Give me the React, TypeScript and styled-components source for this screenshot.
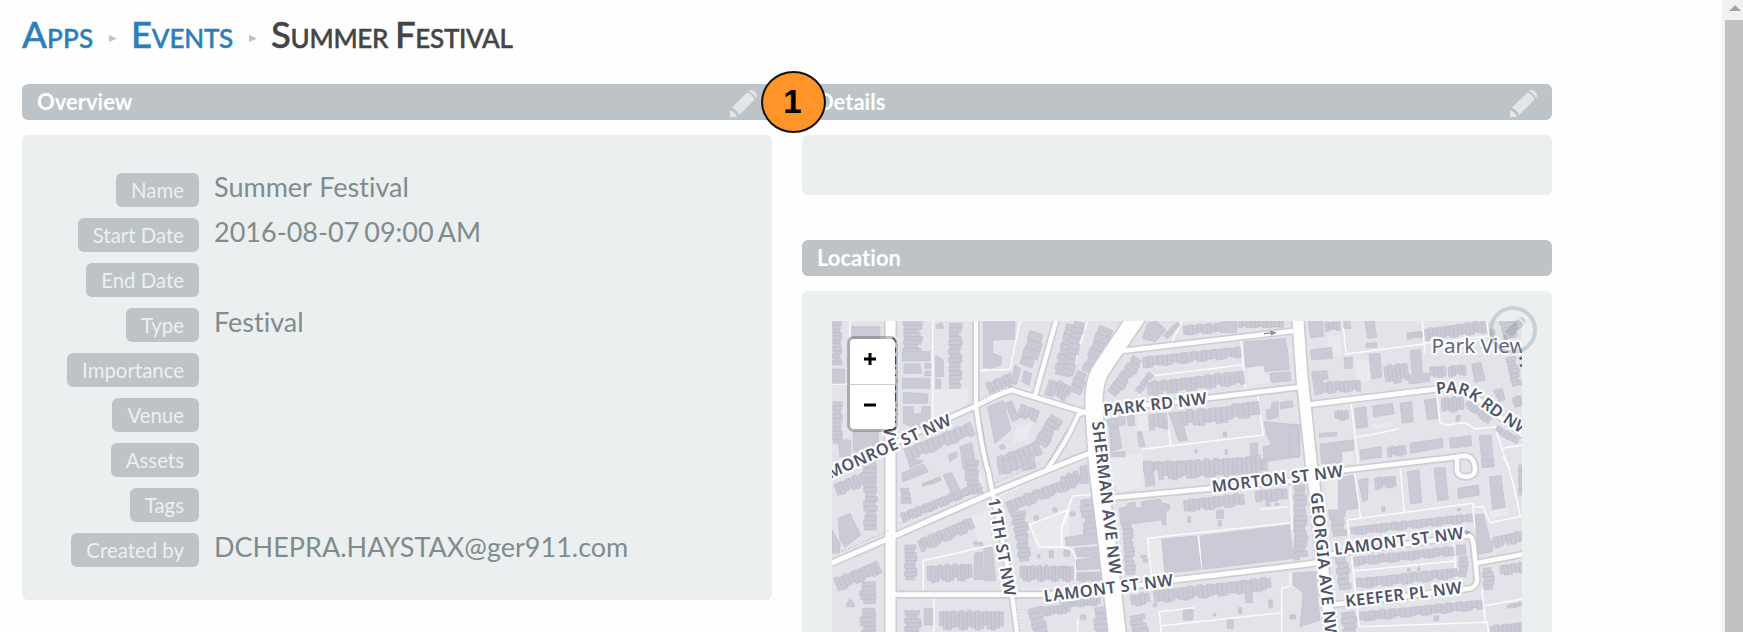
import React from "react";
import styled, { createGlobalStyle } from "styled-components";

const GlobalStyle = createGlobalStyle`
  * { box-sizing: border-box; }
  html, body { margin: 0; padding: 0; background: #fefefe; overflow: hidden; }
  body { font-family: Lato, "Open Sans", sans-serif; font-variant-ligatures: none; }
`;

const Screen = styled.div`
  display: flex;
  width: 1743px;
  height: 632px;
  overflow: hidden;
  background: #fefefe;
`;

const Page = styled.main`
  flex: 1;
  min-width: 0;
  padding: 0 0 0 22px;
`;

const Breadcrumbs = styled.nav`
  display: flex;
  align-items: baseline;
  height: 84px;
  padding-top: 12px;
  font-size: 36.5px;
  font-weight: 500;
  line-height: 44px;
  font-variant-caps: small-caps;
  white-space: nowrap;
`;

const Crumb = styled.span<{ $current?: boolean; $width: number; $tracking?: number }>`
  width: ${(p) => p.$width}px;
  letter-spacing: ${(p) => p.$tracking ?? 0}px;
  word-spacing: -2px;
  color: ${(p) => (p.$current ? "#444444" : "#2980b9")};
  -webkit-text-stroke: 0.5px currentColor;
`;

const CrumbArrow = styled.svg`
  width: 8px;
  height: 7px;
  margin: 0 14px 0 16px;
  position: relative;
  top: -6px;
`;

const Columns = styled.div`
  display: grid;
  grid-template-columns: 750px 750px;
  column-gap: 30px;
  align-items: start;
`;

const Column = styled.div`
  display: flex;
  flex-direction: column;
`;

const Section = styled.section`
  position: relative;
  margin-bottom: 45px;
`;

const SectionBar = styled.header`
  display: flex;
  align-items: center;
  justify-content: space-between;
  height: 36px;
  padding: 0 15px;
  border-radius: 6px;
  background: #bdc3c7;
`;

const SectionTitle = styled.h2`
  margin: 0;
  color: #ffffff;
  font-size: 22px;
  font-weight: 700;
  line-height: 36px;
`;

const EditIcon = styled.svg`
  width: 27px;
  height: 27px;
  margin-top: 3px;
`;

const Panel = styled.div<{ $height: number; $pad?: string }>`
  position: relative;
  height: ${(p) => p.$height}px;
  margin-top: 15px;
  padding: ${(p) => p.$pad ?? "0"};
  border-radius: 6px;
  background: #ebeff0;
`;

const Field = styled.div`
  display: flex;
  height: 45px;
`;

const FieldLabelCell = styled.div`
  width: 177px;
  padding-top: 7.5px;
  display: flex;
  justify-content: flex-end;
  align-items: flex-start;
`;

const FieldLabel = styled.span`
  height: 34.5px;
  padding: 0 15px;
  border-radius: 6px;
  background: #bdc3c7;
  color: #ecf0f1;
  font-size: 20.4px;
  line-height: 34px;
  white-space: nowrap;
`;

const FieldValue = styled.span<{ $tight: boolean }>`
  margin-left: 15px;
  color: #7f8c8d;
  font-size: 27px;
  line-height: 43px;
  word-spacing: ${(p) => (p.$tight ? -2 : 1)}px;
  white-space: nowrap;
`;

const StepBadge = styled.div`
  position: absolute;
  left: -41px;
  top: -13px;
  width: 65px;
  height: 62px;
  border: 2px solid #111111;
  border-radius: 50%;
  background: #ff9428;
  color: #000000;
  font: 700 33px/57px "Liberation Sans", Arial, sans-serif;
  text-align: center;
  padding-right: 2px;
`;

const MapFrame = styled.div`
  position: relative;
  width: 690px;
  height: 400px;
  overflow: hidden;
`;

const MapCanvas = styled.svg`
  display: block;
  width: 690px;
  height: 400px;
`;

const ZoomControl = styled.div`
  position: absolute;
  left: 15px;
  top: 15px;
  border: 3px solid rgba(0, 0, 0, 0.24);
  border-radius: 7px;
  background: #ffffff;
  background-clip: padding-box;
`;

const ZoomButton = styled.button`
  display: flex;
  align-items: center;
  justify-content: center;
  width: 45px;
  height: 45px;
  padding: 0 6px 5px 0;
  border: 0;
  background: transparent;
  & + & {
    border-top: 1px solid #cccccc;
  }
`;

const MapEdit = styled.svg`
  position: absolute;
  right: 15px;
  top: 15px;
  width: 48px;
  height: 48px;
`;

const Scrollbar = styled.div`
  display: flex;
  flex-direction: column;
  width: 21px;
  background: #f1f1f1;
`;

const ScrollArrow = styled.svg`
  width: 12px;
  height: 6px;
  margin: 5px 0 9px 7px;
  flex: none;
`;

const ScrollThumb = styled.div`
  flex: 1;
  margin-left: 3px;
  background: #c1c1c1;
`;

/* [x1, y1, x2, y2, houses, depth]: a terrace of houses along a line */
type Terrace = [number, number, number, number, number, number];

type Tile = {
  x: number;
  y: number;
  terraces: Terrace[];
  buildings: string[];
  paths: string;
  yards?: string[];
};

const tiles: Tile[] = [
  {
    x: 820, y: 310,
    terraces: [
      [36, 35, 36, 165, 12, -28], [247, 35, 247, 125, 8, -58], [385, 40, 385, 235, 15, -40],
      [628, 60, 595, 160, 4, -50], [735, 40, 700, 190, 10, -50], [495, 220, 570, 185, 6, 45],
      [690, 205, 750, 225, 5, 50], [605, 280, 660, 300, 4, 40], [690, 310, 640, 390, 6, -45],
      [530, 440, 650, 390, 8, 50], [250, 415, 450, 335, 12, 42], [36, 275, 36, 400, 10, -30],
    ],
    buildings: [
      "36,177 74,177 74,220 36,220", "95,50 180,50 180,85 95,85", "247,125 330,125 330,152 247,152",
      "252,162 300,162 305,190 252,190", "247,205 330,205 330,235 247,235", "250,247 323,252 323,280 250,280",
      "250,290 280,290 280,312 305,310 305,290 330,290 330,340 285,355 250,340", "347,137 370,150 370,200 347,200",
      "347,207 362,207 362,235 347,235", "315,160 332,160 332,175 315,175", "315,183 332,183 332,198 315,198",
      "490,35 585,35 583,88 518,90 518,130 545,140 543,165 515,175 490,172", "585,165 602,175 590,222 575,215",
      "612,182 635,190 628,225 605,215", "503,290 550,272 573,360 525,400", "555,280 575,272 597,325 577,335",
      "420,410 455,398 470,478 430,478", "385,435 410,425 412,440 390,455", "55,390 92,390 92,440 60,440",
      "100,365 175,365 175,440 150,478 100,460", "537,408 550,402 557,415 544,420", "347,45 365,38 372,55 352,55",
    ],
    yards: ["340,240 445,235 440,290 370,325 340,325", "590,350 640,335 620,390 580,400"],
    paths: "M90 33V80M338 33V330M600 33L570 178L475 182M36 222H80",
  },
  {
    x: 820, y: 460,
    terraces: [
      [40, 70, 130, 35, 8, 40], [172, 10, 172, 210, 14, 40], [305, 70, 360, 50, 4, 12],
      [475, 0, 478, 90, 6, 40], [242, 85, 242, 130, 3, -30], [240, 160, 440, 80, 18, 28],
      [440, 80, 480, 68, 3, 30], [290, 240, 450, 170, 14, 40], [252, 255, 252, 360, 9, -38],
      [320, 315, 455, 308, 12, 52], [555, 125, 748, 50, 14, 36], [570, 160, 585, 240, 7, -45],
      [588, 240, 595, 305, 5, -38], [600, 315, 748, 315, 14, 48], [530, 0, 640, -20, 6, 45],
      [40, 355, 170, 300, 10, 42], [170, 365, 172, 430, 5, 50], [170, 445, 170, 525, 6, 48],
      [252, 452, 252, 525, 6, -50], [358, 450, 550, 450, 16, 58], [620, 450, 640, 525, 5, -45],
      [665, 440, 748, 430, 7, 28],
    ],
    buildings: [
      "55,175 90,160 122,225 75,262 60,240", "36,210 60,250 60,275 36,280", "245,40 310,12 325,35 250,65",
      "265,0 305,0 310,5 270,25", "370,45 395,38 420,90 395,105", "463,280 487,275 490,358 463,360",
      "492,265 517,262 527,362 492,362", "80,430 90,417 103,430 103,440 80,440", "313,445 338,445 338,495 313,495",
      "460,245 470,243 474,255 464,257", "475,248 486,245 490,257 479,259", "640,170 653,165 656,178 645,182",
      "697,145 708,142 712,155 702,158", "688,272 700,272 700,294 688,294", "733,272 748,272 748,288 733,288",
      "652,284 660,284 660,294 652,294",
    ],
    yards: ["450,170 500,150 515,250 475,245", "628,195 748,155 748,262 657,262"],
    paths: "M515 255L310 302V395M342 412V516M748 150L628 193L657 262H748M748 150L725 205V262",
  },
  {
    x: 1060, y: 310,
    terraces: [
      [40, 33, 5, 190, 10, -35], [115, 45, 65, 180, 6, -45], [50, 180, 25, 240, 3, -38],
      [0, 210, 40, 235, 4, 30], [370, 45, 480, 38, 8, 30], [535, 33, 670, 33, 11, 20],
      [247, 140, 540, 108, 20, 33], [220, 135, 140, 240, 9, -38], [265, 185, 225, 240, 5, -20],
      [260, 215, 550, 180, 20, 42], [265, 310, 320, 305, 4, 50], [362, 300, 515, 285, 9, 50],
      [515, 280, 595, 270, 5, 48], [250, 455, 400, 450, 9, 30], [400, 462, 620, 445, 14, 40],
      [310, 75, 350, 35, 4, 16],
    ],
    buildings: [
      "263,40 290,33 318,60 285,95 247,85", "483,35 530,33 530,68 483,68", "552,95 677,85 687,155 557,172",
      "612,168 685,158 688,178 615,185", "630,190 690,185 692,212 635,218", "140,330 195,318 195,345 145,350",
      "148,350 175,350 185,415 152,425", "200,318 222,315 225,347 205,347", "327,310 360,305 382,390 357,395",
      "618,300 635,297 635,278 655,275 655,320 622,330", "660,278 697,272 700,290 662,297",
      "612,335 720,345 720,440 612,455 610,410 635,405 620,375", "232,365 245,365 255,410 238,410",
      "150,427 195,425 195,440 150,440", "570,400 592,398 597,480 575,480", "490,366 500,366 500,380 490,380",
      "404,420 411,420 411,429 404,429", "495,418 501,418 503,433 496,433",
    ],
    yards: ["560,175 610,170 630,215 565,225", "185,445 245,440 250,480 200,480", "230,318 262,315 265,360 232,362"],
    paths: "M82 33L38 180M368 33L335 95M543 90L557 240M547 165L275 197L235 260M593 255L610 375L247 418M320 305L332 405",
  },
  {
    x: 1060, y: 460,
    terraces: [
      [0, 50, 50, 30, 5, 45], [293, 5, 600, -15, 22, 55], [370, 118, 550, 98, 12, 38],
      [585, 90, 680, 82, 6, 38], [100, 115, 115, 220, 6, 42], [0, 318, 40, 318, 4, 45],
      [50, 335, 125, 335, 8, 30], [185, 195, 195, 345, 11, -32], [720, 130, 720, 300, 8, 18],
      [0, 420, 120, 410, 12, 25], [210, 405, 265, 395, 4, 35], [280, 390, 630, 350, 24, 40],
      [205, 470, 215, 525, 4, -50], [145, 440, 150, 525, 5, 45],
    ],
    buildings: [
      "60,20 80,15 85,70 60,70", "250,5 275,3 285,75 258,80",
      "178,145 200,140 205,130 225,127 228,145 245,142 243,125 300,118 305,130 328,133 328,150 318,153 318,195 308,195 305,180 183,195",
      "305,238 410,228 423,328 315,340", "420,228 688,195 700,295 428,328", "15,232 110,220 118,250 18,258",
      "45,265 118,260 120,290 50,290", "48,300 125,290 128,325 50,330", "370,450 400,448 400,480 370,480",
      "555,370 575,370 578,428 557,428", "625,420 637,420 637,442 627,442", "690,465 706,465 706,477 690,477",
      "502,480 520,480 520,505 502,505", "535,443 545,443 545,461 535,461", "470,150 490,150 490,175 470,175",
      "383,170 392,170 392,187 383,187", "475,182 484,182 484,198 475,198", "30,155 45,155 45,168 30,168",
      "618,118 630,118 630,138 618,138", "645,130 656,130 656,136 645,136", "243,286 258,286 258,294 243,294",
      "250,298 263,298 263,306 250,306", "62,465 77,465 77,478 62,478", "280,430 290,430 290,440 280,440",
      "700,340 720,338 720,375 703,375", "12,270 25,270 25,288 12,288", "460,460 467,460 467,468 460,468",
    ],
    yards: ["265,240 303,238 312,340 280,345", "85,0 250,-20 250,80 180,95"],
    paths: "M690 188L262 235L275 350M690 80L697 210M685 140L600 148M415 228L427 328M100 103L38 108L5 200V260L35 268L47 290V360M303 516L298 455L400 443V485M305 497L665 458V385L690 378V340M665 458V516M0 157L24 150M53 475V516",
  },
  {
    x: 1290, y: 310,
    terraces: [
      [105, 35, 150, 33, 4, 28], [280, 165, 350, 155, 6, 58], [418, 170, 465, 165, 4, 34],
      [473, 168, 525, 162, 5, 32], [403, 55, 585, 30, 15, 38], [100, 215, 210, 208, 9, 35],
      [350, 68, 395, 62, 4, 20], [453, 262, 520, 258, 6, 45], [540, 265, 610, 320, 7, 28],
      [645, 145, 665, 230, 7, -32], [625, 345, 690, 385, 5, 22], [665, 262, 697, 252, 3, 32],
      [135, 300, 175, 300, 4, 30], [290, 410, 345, 403, 5, 32], [625, 35, 640, 90, 5, -50],
    ],
    buildings: [
      "55,35 98,33 100,78 62,83", "160,35 180,35 183,55 162,55", "225,35 253,33 260,82 233,85",
      "228,100 260,98 260,112 228,112", "62,120 125,112 127,145 65,150", "237,133 270,130 275,202 245,207",
      "360,122 392,118 397,190 418,190 418,215 357,222 357,195 367,192", "545,162 573,157 585,210 555,217",
      "65,185 110,182 115,205 98,210 98,250 75,255", "162,143 187,141 187,175 165,175", "193,295 228,291 233,350 200,355",
      "248,288 307,280 312,312 252,320", "330,280 365,275 370,335 337,340", "403,270 437,265 443,325 412,330",
      "610,240 637,235 645,270 627,275", "90,402 190,390 192,420 155,425 155,460 95,460",
      "210,420 273,410 275,442 213,450", "360,400 457,385 460,412 363,430", "478,385 542,377 545,407 482,415",
      "568,377 603,375 612,470 577,473", "88,370 140,367 140,378 88,382", "0,345 22,345 28,440 0,440",
      "498,318 510,316 510,332 498,334", "600,60 615,60 615,75 600,75",
    ],
    yards: ["195,155 238,150 245,210 200,215", "110,80 150,75 155,135 115,140", "240,345 310,335 310,350 245,358", "155,430 190,425 190,460 160,460"],
    paths: "M158 33L168 132L402 102L397 33M402 102L407 130M183 275L205 465M193 382L250 373L325 357M440 240L450 338L470 345L525 338L555 357L615 350L640 430L660 478M640 415L697 405M590 35L597 78L403 100",
  },
  {
    x: 1290, y: 460,
    terraces: [
      [253, 52, 315, 45, 6, 36], [182, 200, 545, 160, 24, 26], [10, 75, 15, 290, 14, -38],
      [120, 180, 125, 230, 3, -45], [190, 290, 490, 258, 20, 28], [198, 355, 500, 322, 20, 32],
      [505, 290, 505, 350, 4, -28], [608, 230, 697, 210, 7, 34], [135, 295, 145, 390, 6, -38],
      [575, 325, 580, 390, 5, -34], [628, 315, 697, 305, 6, 32], [207, 455, 575, 418, 24, 30],
      [600, 495, 697, 485, 8, 35], [150, 460, 160, 525, 4, -45], [650, 435, 697, 425, 4, 12],
      [685, 15, 685, 105, 5, -12],
    ],
    buildings: [
      "115,150 145,150 145,55 190,45 205,145 165,150 165,170 120,180", "205,60 235,55 232,120 218,125",
      "352,35 387,30 395,128 362,132", "432,25 465,22 475,118 443,122", "503,85 565,75 568,105 505,115",
      "598,50 633,47 645,142 608,148", "575,0 610,0 610,20 580,22", "500,255 527,255 527,285 500,285",
      "555,165 580,162 600,240 610,245 607,275 565,283", "10,340 75,335 90,480 30,500 40,400 10,375",
      "275,140 284,138 284,154 275,154", "502,145 511,145 511,152 502,152", "432,468 446,468 446,482 432,482",
      "353,325 360,325 360,335 353,335", "383,322 389,322 389,333 383,333", "0,465 15,465 15,477 0,477",
    ],
    yards: ["105,60 148,55 148,145 115,148", "598,155 655,145 655,165 600,175"],
    paths: "M193 35L212 175M330 20L343 155M172 180L548 130L555 205M172 180L190 335L208 500L592 487L595 516M192 333L495 303M490 250L500 355M575 385L587 490M585 437L697 417M548 140H580L600 188L697 168M640 -10Q665 30 690 168",
  },
];

const roads: { d: string; w: number }[] = [
  { d: "M976 321V406Q982 452 988 470L992 490L1003 543L1011.7 593L1018 640", w: 4.2 },
  { d: "M1090 414L1011.7 390Q998 394 976 406L940 422L832 472", w: 4.6 },
  { d: "M1056 321L1035 396", w: 4.4 },
  { d: "M832 563L892 537L992 493L1060 465L1098 450", w: 5 },
  { d: "M1094 408L1078 415Q1068 440 1045 472", w: 4 },
  { d: "M1113 352L1130 350L1293 331", w: 4.4 },
  { d: "M1095 411L1200 399L1300 387", w: 4.6 },
  { d: "M1306 405L1437 389Q1470 388 1488 408L1530 440", w: 4.8 },
  { d: "M1110 498L1300 480L1345 470L1457 457Q1475 452 1475 470C1475 479 1457 479 1457 470V458", w: 4.6 },
  { d: "M892 594.7H1043L1108 590L1173 580L1300 565L1322 562", w: 4.8 },
  { d: "M1320 556L1465 536Q1473 533 1474 548L1477 578Q1478 588 1466 589L1330 605", w: 4.4 },
  { d: "M1477 563L1530 553", w: 4.6 },
  { d: "M890.5 315V640", w: 10 },
  { d: "M1138 315L1101 370Q1093 382 1094 410L1098 470L1107 543L1118 640", w: 17 },
  { d: "M1297.5 315L1302 377L1312 470L1315 493L1323 570L1332 640", w: 11 },
];

/* Houses get a slightly uneven depth so that a terrace looks natural. */
function terracePath([x1, y1, x2, y2, n, depth]: Terrace): string {
  const dx = (x2 - x1) / n;
  const dy = (y2 - y1) / n;
  const len = Math.hypot(dx, dy);
  const nx = -dy / len;
  const ny = dx / len;
  let d = "";
  for (let i = 0; i < n; i++) {
    const far = depth * (0.78 + 0.26 * Math.abs(Math.sin(i * 2.3 + x1)));
    const near = depth * 0.12 * Math.abs(Math.sin(i * 1.7 + y1));
    const ax = x1 + dx * i;
    const ay = y1 + dy * i;
    const pt = (x: number, y: number, k: number) => `${(x + nx * k).toFixed(1)} ${(y + ny * k).toFixed(1)}`;
    d += `M${pt(ax, ay, near)}L${pt(ax + dx, ay + dy, near)}L${pt(ax + dx, ay + dy, far)}L${pt(ax, ay, far)}Z`;
  }
  return d;
}

const streets: { id: string; d: string; text: string; length: number }[] = [
  { id: "thirteenth", d: "M884 336V460", text: "13TH ST NW", length: 100 },
  { id: "monroe", d: "M830 479L962 420", text: "MONROE ST NW", length: 134 },
  { id: "eleventh", d: "M988 499L1007 610", text: "11TH ST NW", length: 99 },
  { id: "park", d: "M1104 416L1217 402.7", text: "PARK RD NW", length: 104 },
  { id: "sherman", d: "M1092 422L1112 592", text: "SHERMAN AVE NW", length: 154 },
  { id: "morton", d: "M1212.5 492.5L1354 475.5", text: "MORTON ST NW", length: 132 },
  { id: "lamontWest", d: "M1044.5 602L1182 584.5", text: "LAMONT ST NW", length: 130 },
  { id: "lamontEast", d: "M1335 555L1473 537.5", text: "LAMONT ST NW", length: 130 },
  { id: "keefer", d: "M1346 607L1471 592", text: "KEEFER PL NW", length: 117 },
  { id: "georgia", d: "M1310.5 493L1328 660", text: "GEORGIA AVE NW", length: 148 },
  { id: "parkEast", d: "M1436.5 394.5Q1461 390 1475 402Q1492 416 1532 441", text: "PARK RD NW", length: 103 },
];

function StreetMap() {
  return (
    <MapCanvas viewBox="832 321 690 400">
      <rect x="832" y="321" width="690" height="400" fill="#e3e4e9" />
      {tiles.map((t) => (
        <g key={`${t.x}-${t.y}`} transform={`translate(${t.x} ${t.y}) scale(0.33333)`}>
          {t.yards?.map((p) => <polygon key={p} points={p} fill="#e9eaee" />)}
          <path d={t.paths} fill="none" stroke="#fbfbfc" strokeWidth="4.5" strokeLinejoin="round" />
        </g>
      ))}
      <g fill="none" stroke="#cdcdd2" strokeLinejoin="round">
        {roads.map((r) => <path key={r.d} d={r.d} strokeWidth={r.w + 3.4} />)}
      </g>
      {tiles.map((t) => (
        <g
          key={`${t.x}-${t.y}`}
          transform={`translate(${t.x} ${t.y}) scale(0.33333)`}
          fill="#cbcad6"
          stroke="#c0bfcc"
          strokeWidth="2"
        >
          {t.terraces.map((r) => <path key={r.join()} d={terracePath(r)} />)}
          {t.buildings.map((p) => <polygon key={p} points={p} />)}
        </g>
      ))}
      <g fill="none" stroke="#fdfdfd" strokeLinejoin="round">
        {roads.map((r) => <path key={r.d} d={r.d} strokeWidth={r.w} />)}
      </g>
      <g fill="none" stroke="#f8f8fa" strokeWidth="1.3" strokeDasharray="1.5 2">
        <path d="M1000 495L1068 467L1090 458M980 474L985 492M1015 600L1023 640M1022 589H1042M981 400L1008 387M1012 385L1030 390" />
      </g>
      <g fill="none" stroke="#bbbac5" strokeWidth="1.3" strokeDasharray="1.3 2">
        <path d="M836 554L890 530M900 524L985 487M995 483L1040 463M982 425L990 468M1048 462L1068 428" />
      </g>
      <path d="M1264 333.6L1271 333" stroke="#8b8b96" strokeWidth="1.2" />
      <path d="M1270 330.5L1277 332.6L1271 335.5Z" fill="#8b8b96" />
      <path d="M1465 530L1471 532L1466 535Z" fill="#a5a5b0" />
      <g
        fontFamily='"Noto Sans", "Open Sans", sans-serif'
        fill="#4f5368"
        stroke="#fdfdfd"
        strokeWidth="4.5"
        strokeLinejoin="round"
        style={{ paintOrder: "stroke" }}
      >
        {streets.map((s) => (
          <React.Fragment key={s.id}>
            <path id={s.id} d={s.d} fill="none" stroke="none" />
            <text fontSize={16.4} fontWeight={600}>
              <textPath href={`#${s.id}`} textLength={s.length} lengthAdjust="spacing">
                {s.text}
              </textPath>
            </text>
          </React.Fragment>
        ))}
        <text x="1431.5" y="353" fontSize="20.7" fill="#62667a">Park View</text>
      </g>
      <path d="M1519.5 359L1522 357.5M1520 366L1522 365" stroke="#4f5368" strokeWidth="2.4" />
    </MapCanvas>
  );
}

function PencilShape() {
  return (
    <>
      <path d="M0 27V20.3Q4.6 21.6 6.8 27Z" />
      <path d="M1.8 17.8L17.3 2.4Q22.3 4 24.6 9.6L9.2 25Q7.2 19.6 1.8 17.8Z" />
      <path d="M18.7 1.2Q20.6 -0.6 23.2 0.4Q26.6 2.2 27 5.4Q27 7 25.9 8.3Q23.8 3.2 18.7 1.2Z" />
    </>
  );
}

function EditPencil() {
  return (
    <EditIcon viewBox="0 0 27 27" fill="#e3e6e8">
      <PencilShape />
    </EditIcon>
  );
}

const fields: { label: string; value?: string; tight?: boolean }[] = [
  { label: "Name", value: "Summer Festival" },
  { label: "Start Date", value: "2016-08-07 09:00 AM", tight: true },
  { label: "End Date" },
  { label: "Type", value: "Festival" },
  { label: "Importance" },
  { label: "Venue" },
  { label: "Assets" },
  { label: "Tags" },
  { label: "Created by", value: "DCHEPRA.HAYSTAX@ger911.com" },
];

function Separator() {
  return (
    <CrumbArrow viewBox="0 0 8 7">
      <path d="M0 0L8 3.5L0 7Z" fill="#bdc3c7" />
    </CrumbArrow>
  );
}

export default function App() {
  return (
    <Screen>
      <GlobalStyle />
      <Page>
        <Breadcrumbs>
          <Crumb $width={71} $tracking={0.2}>Apps</Crumb>
          <Separator />
          <Crumb $width={102} $tracking={-0.2}>Events</Crumb>
          <Separator />
          <Crumb $width={260} $tracking={-0.3} $current>Summer Festival</Crumb>
        </Breadcrumbs>
        <Columns>
          <Column>
            <Section>
              <SectionBar>
                <SectionTitle>Overview</SectionTitle>
                <EditPencil />
              </SectionBar>
              <Panel $height={465} $pad="30px 0">
                {fields.map(({ label, value, tight }) => (
                  <Field key={label}>
                    <FieldLabelCell>
                      <FieldLabel>{label}</FieldLabel>
                    </FieldLabelCell>
                    <FieldValue $tight={!!tight}>{value}</FieldValue>
                  </Field>
                ))}
              </Panel>
            </Section>
          </Column>
          <Column>
            <Section>
              <SectionBar>
                <SectionTitle>Details</SectionTitle>
                <EditPencil />
              </SectionBar>
              <Panel $height={60} />
              <StepBadge>1</StepBadge>
            </Section>
            <Section>
              <SectionBar>
                <SectionTitle>Location</SectionTitle>
              </SectionBar>
              <Panel $height={460} $pad="30px">
                <MapFrame>
                  <StreetMap />
                  <ZoomControl>
                    <ZoomButton aria-label="Zoom in">
                      <svg width="12" height="12" viewBox="0 0 12 12">
                        <path d="M0 6H12M6 0V12" stroke="#000" strokeWidth="3" />
                      </svg>
                    </ZoomButton>
                    <ZoomButton aria-label="Zoom out">
                      <svg width="12" height="12" viewBox="0 0 12 12">
                        <path d="M0 6H12" stroke="#000" strokeWidth="3" />
                      </svg>
                    </ZoomButton>
                  </ZoomControl>
                </MapFrame>
                <MapEdit viewBox="0 0 48 48">
                  <circle cx="24" cy="24" r="22" fill="none" stroke="rgba(127,140,141,0.3)" strokeWidth="4" />
                  <g transform="translate(14 11) scale(0.84)" fill="rgba(127,140,141,0.3)">
                    <PencilShape />
                  </g>
                </MapEdit>
              </Panel>
            </Section>
          </Column>
        </Columns>
      </Page>
      <Scrollbar>
        <ScrollArrow viewBox="0 0 12 6">
          <path d="M0 6L6 0L12 6Z" fill="#a3a3a3" />
        </ScrollArrow>
        <ScrollThumb />
      </Scrollbar>
    </Screen>
  );
}
